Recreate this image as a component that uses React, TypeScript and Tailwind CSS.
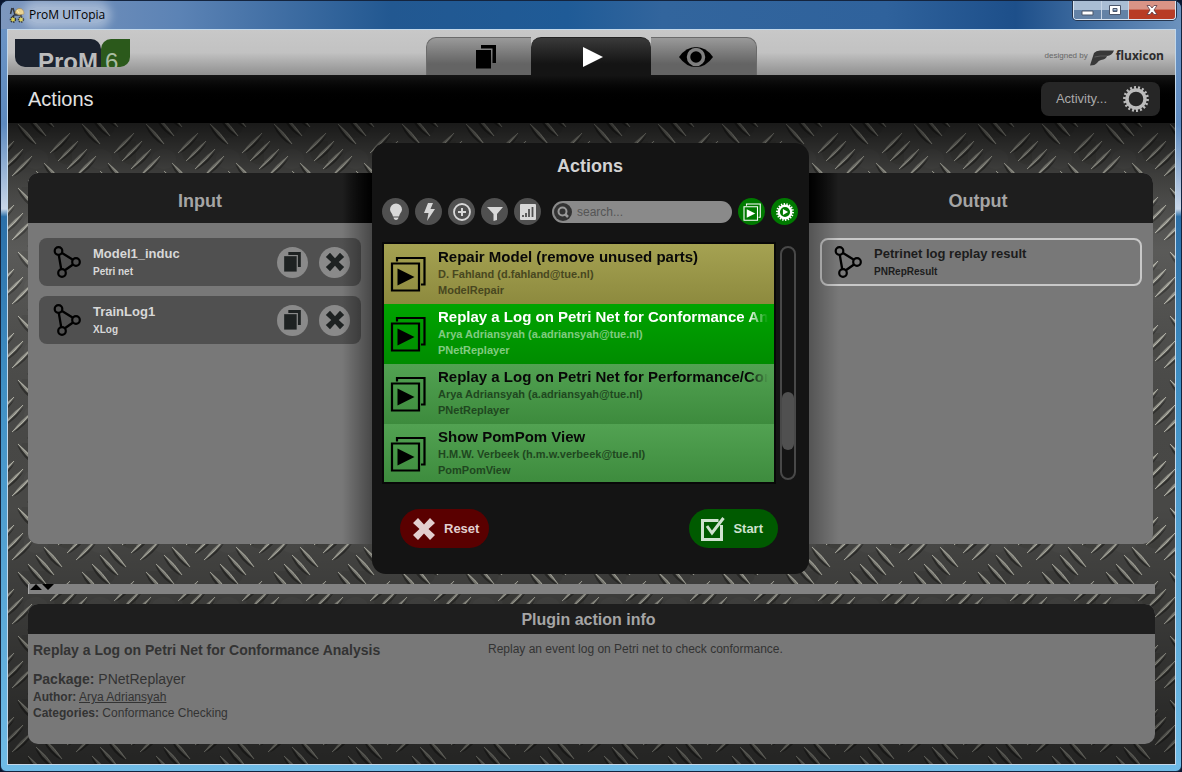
import type { ReactNode } from "react";

type Plugin = {
  title: string;
  author: string;
  pack: string;
  row: string;
  titleTone: string;
  metaTone: string;
};

const plugins: Plugin[] = [
  {
    title: "Repair Model (remove unused parts)",
    author: "D. Fahland (d.fahland@tue.nl)",
    pack: "ModelRepair",
    row: "bg-linear-to-b from-[#a5a252] to-[#8d8a3e]",
    titleTone: "text-[#080808]",
    metaTone: "text-[#48471f]",
  },
  {
    title: "Replay a Log on Petri Net for Conformance Analysis",
    author: "Arya Adriansyah (a.adriansyah@tue.nl)",
    pack: "PNetReplayer",
    row: "bg-linear-to-b from-[#00a400] to-[#008c00]",
    titleTone: "text-white",
    metaTone: "text-[#80cb80]",
  },
  {
    title: "Replay a Log on Petri Net for Performance/Conformance Analysis",
    author: "Arya Adriansyah (a.adriansyah@tue.nl)",
    pack: "PNetReplayer",
    row: "bg-linear-to-b from-[#52a252] to-[#3d8b3d]",
    titleTone: "text-[#080808]",
    metaTone: "text-[#1f471f]",
  },
  {
    title: "Show PomPom View",
    author: "H.M.W. Verbeek (h.m.w.verbeek@tue.nl)",
    pack: "PomPomView",
    row: "bg-linear-to-b from-[#52a252] to-[#3d8b3d]",
    titleTone: "text-[#080808]",
    metaTone: "text-[#1f471f]",
  },
];

const inputs = [
  { name: "Model1_induc", type: "Petri net" },
  { name: "TrainLog1", type: "XLog" },
];

// Centres of the raised treads inside one 64px tile of the plate.
const slashes: [number, number][] = [[52, 20], [60, 28], [69, 36], [78, 43]];
const backslashes: [number, number][] = [[19, 11], [29, 3], [37, -6], [45, -14]];

function DiamondPlate() {
  const cells = [-64, 0, 64];
  return (
    <svg aria-hidden="true" className="absolute inset-0 h-full w-full">
      <defs>
        <pattern id="plate" width="64" height="64" patternUnits="userSpaceOnUse">
          <rect width="64" height="64" fill="#484846" />
          <ellipse cx="62" cy="30" rx="16" ry="12" fill="#3b3b39" opacity=".45" />
          <ellipse cx="28" cy="4" rx="15" ry="11" fill="#3c3c3a" opacity=".4" />
          <ellipse cx="28" cy="36" rx="12" ry="10" fill="#525250" opacity=".35" />
          {cells.map((dx) =>
            cells.map((dy) => (
              <g key={`${dx}:${dy}`}>
                {slashes.map(([x, y]) => (
                  <g key={`s${x}`} transform={`translate(${x + dx} ${y + dy})`}>
                    <path d="M-9 11Q1 2 11-8Q3 5-9 11Z" fill="#222220" opacity=".7" />
                    <path d="M-10 10Q-2-2 10-10Q2 2-10 10Z" fill="#8a8a82" />
                    <path d="M-10 10Q1 1 10-10" fill="none" stroke="#c9c9bb" strokeWidth=".8" />
                  </g>
                ))}
                {backslashes.map(([x, y]) => (
                  <g key={`b${x}`} transform={`translate(${x + dx} ${y + dy})`}>
                    <path d="M-10-9Q-4 5 8 11Q1 1-10-9Z" fill="#222220" opacity=".7" />
                    <path d="M-9-10Q-2 2 9 10Q2-2-9-10Z" fill="#8a8a82" />
                    <path d="M-9-10Q2-1 9 10" fill="none" stroke="#c4c4b6" strokeWidth=".8" />
                  </g>
                ))}
              </g>
            )),
          )}
        </pattern>
        <linearGradient id="plateShade" x2="0" y2="1">
          <stop offset="0" stopColor="#000" stopOpacity=".65" />
          <stop offset=".08" stopColor="#000" stopOpacity=".15" />
          <stop offset=".2" stopColor="#fff" stopOpacity=".1" />
          <stop offset=".6" stopColor="#000" stopOpacity="0" />
          <stop offset="1" stopColor="#000" stopOpacity=".5" />
        </linearGradient>
      </defs>
      <rect width="100%" height="100%" fill="url(#plate)" />
      <rect width="100%" height="100%" fill="url(#plateShade)" />
    </svg>
  );
}

function NetIcon() {
  return (
    <svg aria-hidden="true" viewBox="0 0 28 32" className="h-8 w-7 shrink-0" fill="none" stroke="#000">
      <path d="M9 7 19.500 13.500M5.800 9 8.200 23M11.500 24.500 20 18.500" strokeWidth="2.300" />
      <g strokeWidth="2.200">
        <circle cx="5.500" cy="5" r="3.800" />
        <circle cx="23" cy="16" r="3.800" />
        <circle cx="9" cy="27" r="3.800" />
      </g>
    </svg>
  );
}

function CopyIcon({ className }: { className: string }) {
  return (
    <svg aria-hidden="true" viewBox="0 0 20 24" className={className} fill="currentColor">
      <path d="M5 0H20V18H16.500V3.500H5Z" />
      <path d="M0 5H15V23.500H0Z" />
    </svg>
  );
}

function CrossIcon({ className }: { className: string }) {
  return (
    <svg aria-hidden="true" viewBox="0 0 24 24" className={className} fill="currentColor">
      <path d="M6 1 12 7.500 18 1 23 6 16.500 12 23 18 18 23 12 16.500 6 23 1 18 7.500 12 1 6Z" />
    </svg>
  );
}

function FramesIcon({ className }: { className: string }) {
  return (
    <svg aria-hidden="true" viewBox="0 0 36 36" className={className} fill="none" stroke="currentColor" strokeWidth="2.200">
      <path d="M7 5.500V2H34.500V28.500H31" />
      <path d="M2 7.500H29V34.500H2Z" />
      <path d="M7.500 12.500 24.500 21 7.500 29.500Z" fill="currentColor" stroke="none" />
    </svg>
  );
}

function GearIcon({ className, play }: { className: string; play?: boolean }) {
  return (
    <svg aria-hidden="true" viewBox="0 0 26 26" className={className} fill="none" stroke="currentColor">
      <circle cx="13" cy="13" r="9" strokeWidth="3.400" />
      <circle cx="13" cy="13" r="11.500" strokeWidth="2.800" pathLength="72" strokeDasharray="2 2" />
      {play ? <path d="M10 8.500 17.500 13 10 17.500Z" fill="currentColor" stroke="none" /> : null}
    </svg>
  );
}

function RoundButton({ label, green, children }: { label: string; green?: boolean; children: ReactNode }) {
  return (
    <button
      type="button"
      aria-label={label}
      className={`flex h-[27px] w-[27px] shrink-0 items-center justify-center rounded-full ${
        green ? "bg-[#007a00] text-white" : "bg-[#505050] text-[#d8d8d8]"
      }`}
    >
      {children}
    </button>
  );
}

function TitleBar() {
  return (
    <header className="flex h-7 items-start justify-between rounded-t-lg bg-[linear-gradient(to_right,#7d97be,#5c83b5_15%,#225891_33%,#1f5b97_48%,#32659d_56%,#2f629c_75%,#1d4f8a_86%,#6c92bd)] pr-[5px] pl-2">
      <div className="flex items-center gap-1 pt-1.5">
        <svg aria-hidden="true" viewBox="0 0 16 16" className="h-4 w-4">
          <path d="M3 1 1.500 7M4 1 6 8H12V12M5 8 3 11" fill="none" stroke="#33363c" strokeWidth="1.500" />
          <path d="M6 6Q7 1 11 1.500 15 2 15 7L10 8Z" fill="#e8cf87" stroke="#9c7b3c" strokeWidth=".6" />
          <path d="M8 3 10 6" stroke="#fff4c4" />
          <g fill="#d8ce54" stroke="#2e3440" strokeWidth="1.500" strokeDasharray="1.500 .8">
            <circle cx="4" cy="12.500" r="2.500" />
            <circle cx="12" cy="12.500" r="2.500" />
          </g>
        </svg>
        <span className="rounded-full bg-white/35 font-['Open_Sans',sans-serif] text-xs leading-4 text-black shadow-[0_0_8px_6px_rgba(255,255,255,0.35)]">
          ProM UITopia
        </span>
      </div>
      <div className="flex h-[19px] overflow-hidden rounded-b border border-t-0 border-[#dbe6f2] shadow-[0_0_0_1px_#25354d]">
        <button type="button" aria-label="Minimize" className="flex w-7 items-center justify-center border-r border-[#c6d4e5] bg-linear-to-b from-[#a9bdd4] from-50% to-[#6382a6] to-50%">
          <svg aria-hidden="true" viewBox="0 0 13 6" className="mt-1.5 h-1.5 w-[13px]">
            <path d="M1 1H12V5H1Z" fill="#fff" stroke="#4b566b" />
          </svg>
        </button>
        <button type="button" aria-label="Maximize" className="flex w-[27px] items-center justify-center border-r border-[#c6d4e5] bg-linear-to-b from-[#a9bdd4] from-50% to-[#6382a6] to-50%">
          <svg aria-hidden="true" viewBox="0 0 12 10" className="h-2.5 w-3">
            <path fillRule="evenodd" d="M.5.5H11.500V9.500H.5ZM4 3.500V6.500H8V3.500Z" fill="#fff" stroke="#4b566b" />
          </svg>
        </button>
        <button type="button" aria-label="Close" className="flex w-[46px] items-center justify-center bg-linear-to-b from-[#d99486] from-45% to-[#b83c25] to-50%">
          <svg aria-hidden="true" viewBox="0 0 12 10" className="h-2.5 w-3">
            <path d="M1 .5H4L6 3 8 .5H11L8 5 11 9.500H8L6 7 4 9.500H1L4 5Z" fill="#fff" stroke="#5b3a45" strokeWidth=".8" />
          </svg>
        </button>
      </div>
    </header>
  );
}

function TopBar() {
  return (
    <div className="flex h-[45px] items-start justify-between bg-linear-to-b from-[#c8c8c8] via-[#c2c2c2] to-[#909090]">
      <div className="flex-1">
        <div className="mt-[9px] ml-[7px] flex h-7 text-2xl leading-none">
          <div className="w-[86px] overflow-hidden rounded-tr-[10px] rounded-bl-[10px] bg-[#1b222e] pt-[11px] pl-[23px] font-bold text-[#bcbcbc]">
            ProM
          </div>
          <div className="w-[29px] overflow-hidden rounded-tl-[10px] rounded-br-[10px] bg-[#2b591b] pt-[11px] pl-1 text-[#a9bda3]">
            6
          </div>
        </div>
      </div>
      <nav className="flex h-[45px] pt-[7px]" aria-label="Views">
        <button type="button" aria-label="Workspace" className="flex w-[105px] items-center justify-center rounded-tl-[10px] border-t border-l border-[#6b6b6b] bg-linear-to-b from-[#9a9a9a] to-[#646464] to-70% pl-3.5 text-black">
          <CopyIcon className="h-6 w-5" />
        </button>
        <button type="button" aria-label="Actions" className="flex w-[120px] items-center justify-center rounded-t-[10px] border-t border-[#222] bg-linear-to-b from-[#3a3a3a] to-[#141414] to-70% pl-1 text-white">
          <svg aria-hidden="true" viewBox="0 0 20 20" className="h-5 w-5">
            <path d="M0 0 20 10 0 20Z" fill="currentColor" />
          </svg>
        </button>
        <button type="button" aria-label="Views" className="flex w-[106px] items-center justify-center rounded-tr-[10px] border-t border-r border-[#6b6b6b] bg-linear-to-b from-[#9a9a9a] to-[#646464] to-70% pr-4 text-black">
          <svg aria-hidden="true" viewBox="0 0 34 20" className="h-5 w-[34px]">
            <path d="M0 10Q7 0 17 0T34 10Q27 20 17 20T0 10Z" fill="currentColor" />
            <circle cx="17" cy="10" r="7.500" fill="currentColor" stroke="#7f7f7f" strokeWidth="3.500" />
          </svg>
        </button>
      </nav>
      <div className="flex-1">
        <div className="mt-4 mr-[11px] flex items-center justify-end gap-0.5">
          <span className="text-[8px] leading-4 text-[#666]">designed by</span>
          <svg aria-hidden="true" viewBox="0 0 24 16" className="mt-1 h-4 w-6">
            <path d="M4 3Q6 .5 10 .5H24Q22 5.500 17 6 16 9.500 11 10 8.500 10.500 7 13 5 15.500 0 15.500Z" fill="#383838" />
            <path d="M4.500 7Q10 5.500 17 6" fill="none" stroke="#666" strokeWidth=".8" />
          </svg>
          <span className="font-['Open_Sans',sans-serif] text-xs leading-4 font-bold text-[#2c2c2c]">fluxicon</span>
        </div>
      </div>
    </div>
  );
}

function InputCard({ name, type }: { name: string; type: string }) {
  return (
    <li className="flex h-12 items-center rounded-lg bg-[#505050] pr-[11px] pl-3.5">
      <NetIcon />
      <div className="min-w-0 flex-1 pt-0.5 pl-3">
        <p className="text-[13px] leading-4 font-bold text-[#d8d8d8]">{name}</p>
        <p className="mt-0.5 text-[10px] leading-4 font-bold text-[#d8d8d8]">{type}</p>
      </div>
      <div className="flex gap-[11px] text-[#1e2222]">
        <button type="button" aria-label={`Show ${name}`} className="flex h-[31px] w-[31px] items-center justify-center rounded-full bg-[#8a8a8a]">
          <CopyIcon className="h-5 w-[17px]" />
        </button>
        <button type="button" aria-label={`Remove ${name}`} className="flex h-[31px] w-[31px] items-center justify-center rounded-full bg-[#8a8a8a]">
          <CrossIcon className="h-5 w-5" />
        </button>
      </div>
    </li>
  );
}

function ActionsPanel() {
  return (
    <section className="relative flex w-[437px] shrink-0 flex-col rounded-[14px] bg-[#141414] pr-[11px] pb-[26px] pl-2.5">
      <h2 className="pt-[13px] text-center text-lg leading-5 font-bold text-[#d2d2d2]">Actions</h2>
      <div className="mt-[22px] flex items-center gap-1.5">
        <RoundButton label="Hints">
          <svg aria-hidden="true" viewBox="0 0 14 18" className="h-[18px] w-3.5" fill="currentColor">
            <path d="M7 .5A6 6 0 0 1 13 6.500C13 9 10.500 10.500 10 13.500H4C3.500 10.500 1 9 1 6.500A6 6 0 0 1 7 .5ZM4.500 14.500H9.500L9 16Q7 18 5 16Z" />
          </svg>
        </RoundButton>
        <RoundButton label="Quick actions">
          <svg aria-hidden="true" viewBox="0 0 12 18" className="h-[18px] w-3" fill="currentColor">
            <path d="M5 0H10L7.500 6H12L4 18 5.500 10H1Z" />
          </svg>
        </RoundButton>
        <RoundButton label="Add">
          <svg aria-hidden="true" viewBox="0 0 18 18" className="h-[18px] w-[18px]" fill="none" stroke="currentColor">
            <circle cx="9" cy="9" r="8" strokeWidth="1.800" />
            <path d="M9 5V13M5 9H13" strokeWidth="2" />
          </svg>
        </RoundButton>
        <RoundButton label="Filter">
          <svg aria-hidden="true" viewBox="0 0 16 14" className="mt-1 h-3.5 w-4" fill="currentColor">
            <path d="M0 0H16L10 7V13L6.500 14V7Z" />
          </svg>
        </RoundButton>
        <RoundButton label="Statistics">
          <svg aria-hidden="true" viewBox="0 0 16 16" className="h-4 w-4">
            <rect width="16" height="16" rx="1" fill="currentColor" />
            <path d="M3 11V13M6 9V13M9 5V13M12.500 3V13" stroke="#505050" strokeWidth="1.800" />
          </svg>
        </RoundButton>
        <label className="ml-[5px] flex h-[22px] min-w-0 flex-1 items-center rounded-full bg-[#8a8a8a] pl-0.5">
          <span className="flex h-[18px] w-[18px] shrink-0 items-center justify-center rounded-full bg-[#333] text-[#999]">
            <svg aria-hidden="true" viewBox="0 0 12 12" className="h-3 w-3" fill="none" stroke="currentColor" strokeWidth="2">
              <circle cx="5.500" cy="5.500" r="4" />
              <path d="M8 8 11 11" strokeWidth="2.500" />
            </svg>
          </span>
          <input
            type="text"
            aria-label="Search actions"
            placeholder="search..."
            className="min-w-0 flex-1 bg-transparent pl-[5px] text-xs text-[#333] outline-none placeholder:text-[#555]"
          />
        </label>
        <RoundButton label="Show frames" green>
          <FramesIcon className="h-[18px] w-[18px]" />
        </RoundButton>
        <RoundButton label="Run headless" green>
          <GearIcon className="h-[18px] w-[18px]" play />
        </RoundButton>
      </div>

      <div className="mt-[17px] flex gap-1 pr-0.5">
        <ul className="h-[242px] min-w-0 flex-1 overflow-hidden border-2 border-[#080808]">
          {plugins.map((plugin) => (
            <li key={plugin.title} className={`flex h-[60px] items-start pl-1.5 ${plugin.row}`}>
              <FramesIcon className="mt-3 h-9 w-9 shrink-0 text-black" />
              <div className="ml-3 min-w-0 flex-1 pt-1 pr-1.5 font-bold">
                <p
                  className={`overflow-hidden mask-linear-[to_right,black_94%,transparent] text-[15px] leading-[18px] whitespace-nowrap ${plugin.titleTone}`}
                >
                  {plugin.title}
                </p>
                <p className={`text-[11px] leading-4 ${plugin.metaTone}`}>{plugin.author}</p>
                <p className={`text-[11px] leading-4 ${plugin.metaTone}`}>{plugin.pack}</p>
              </div>
            </li>
          ))}
        </ul>
        <div className="my-1 flex w-4 flex-col rounded-full border-2 border-[#484848] pt-36">
          <div className="h-[58px] rounded-full bg-[#505050]" />
        </div>
      </div>

      <div className="mt-[25px] flex justify-between pr-5 pl-[18px]">
        <button type="button" className="flex h-[39px] items-center gap-2 rounded-full bg-[#5a0000] pr-2.5 pl-3 text-[13px] font-bold text-[#e2cfcf]">
          <CrossIcon className="h-6 w-6" />
          Reset
        </button>
        <button type="button" className="flex h-[39px] items-center gap-2 rounded-full bg-[#005a00] pr-[15px] pl-3 text-[13px] font-bold text-[#cfe2cf]">
          <svg aria-hidden="true" viewBox="0 0 24 24" className="h-6 w-6" fill="none" stroke="currentColor">
            <path d="M17.500 3.500H1.500V22.500H20.500V8" strokeWidth="3" />
            <path d="M6 9 11 16 22.500 1" strokeWidth="3" />
          </svg>
          Start
        </button>
      </div>
    </section>
  );
}

function InfoPanel() {
  return (
    <section className="min-h-[140px] overflow-hidden rounded-[10px] bg-[#787878] text-[#333]">
      <h2 className="h-[30px] bg-[#1e1e1e] pt-px pr-1.5 text-center text-base leading-[30px] font-bold text-[#a5a5a5]">
        Plugin action info
      </h2>
      <div className="flex px-[5px] pt-[7px]">
        <div className="w-[455px] shrink-0">
          <h3 className="text-sm leading-[18px] font-bold">Replay a Log on Petri Net for Conformance Analysis</h3>
          <p className="mt-3 text-sm leading-4">
            <b>Package:</b> PNetReplayer
          </p>
          <p className="mt-0.5 text-xs leading-4">
            <b>Author:</b>{" "}
            <a href="#author" className="underline">
              Arya Adriansyah
            </a>
          </p>
          <p className="text-xs leading-4">
            <b>Categories:</b> Conformance Checking
          </p>
        </div>
        <p className="text-xs leading-4">Replay an event log on Petri net to check conformance.</p>
      </div>
    </section>
  );
}

export default function App() {
  return (
    <div className="flex min-h-screen flex-col bg-[#0a1630] font-['Liberation_Sans',Arial,sans-serif]">
      <div className="flex flex-1 flex-col rounded-t-lg rounded-b-md border border-[#14243e] bg-[linear-gradient(to_bottom,#6f96c6,#5d8abf_16%,#c8d6e8_27%,#2b6fa8_28%,#3f8fc4_50%,#6fbbe6)]">
        <TitleBar />
        <div className="mr-[5px] mb-1.5 ml-1.5 flex flex-1 flex-col border border-[#c3d8ea] bg-black">
          <TopBar />
          <div className="flex h-12 items-center justify-between bg-linear-to-b from-[#151515] to-black to-60% pr-[15px] pl-5">
            <h1 className="text-xl text-[#e2e2e2]">Actions</h1>
            <button type="button" className="flex h-[34px] items-center gap-4 rounded-lg bg-[#262626] pr-[11px] pl-[15px] text-[13px] text-[#aaa]">
              Activity...
              <GearIcon className="h-[26px] w-[26px] text-[#bbb]" />
            </button>
          </div>
          <main className="relative flex flex-1 flex-col">
            <DiamondPlate />
            <div className="relative flex flex-1 flex-col p-5">
              <div className="flex flex-1 pr-0.5">
                <section className="relative my-[30px] flex-1 overflow-hidden rounded-l-[10px] bg-[#787878]">
                  <h2 className="h-[50px] bg-[#1e1e1e] pt-0.5 text-center text-lg leading-[52px] font-bold text-[#a5a5a5]">Input</h2>
                  <ul className="flex flex-col gap-2.5 px-[11px] py-[15px]">
                    {inputs.map((item) => (
                      <InputCard key={item.name} {...item} />
                    ))}
                  </ul>
                  <div className="pointer-events-none absolute inset-y-0 right-0 w-[30px] bg-linear-to-r from-transparent to-black/40" />
                  <div className="pointer-events-none absolute top-0 right-0 h-[50px] w-[30px] bg-linear-to-r from-transparent to-black" />
                </section>
                <ActionsPanel />
                <section className="relative my-[30px] flex-1 overflow-hidden rounded-r-[10px] bg-[#787878]">
                  <h2 className="h-[50px] bg-[#1e1e1e] pt-0.5 pr-1.5 text-center text-lg leading-[52px] font-bold text-[#a5a5a5]">Output</h2>
                  <div className="px-[11px] py-[15px]">
                    <div className="flex h-12 items-center rounded-lg border-2 border-[#c8c8c8] pl-3">
                      <NetIcon />
                      <div className="pt-0.5 pl-3 text-[#1c1c1c]">
                        <p className="text-[13px] leading-4 font-bold">Petrinet log replay result</p>
                        <p className="mt-0.5 text-[10px] leading-4 font-bold">PNRepResult</p>
                      </div>
                    </div>
                  </div>
                  <div className="pointer-events-none absolute inset-y-0 left-0 w-[30px] bg-linear-to-l from-transparent to-black/30" />
                  <div className="pointer-events-none absolute top-0 left-0 h-[50px] w-[30px] bg-linear-to-l from-transparent to-black" />
                </section>
              </div>
              <div className="my-2.5 flex h-2.5 items-start border-l border-[#aaa] bg-[#828282] pl-px">
                <svg aria-hidden="true" viewBox="0 0 24 6" className="h-1.5 w-6">
                  <path d="M0 6 6 0 12 6ZM12 0H24L18 6Z" fill="#000" />
                </svg>
              </div>
              <InfoPanel />
            </div>
          </main>
        </div>
      </div>
    </div>
  );
}
